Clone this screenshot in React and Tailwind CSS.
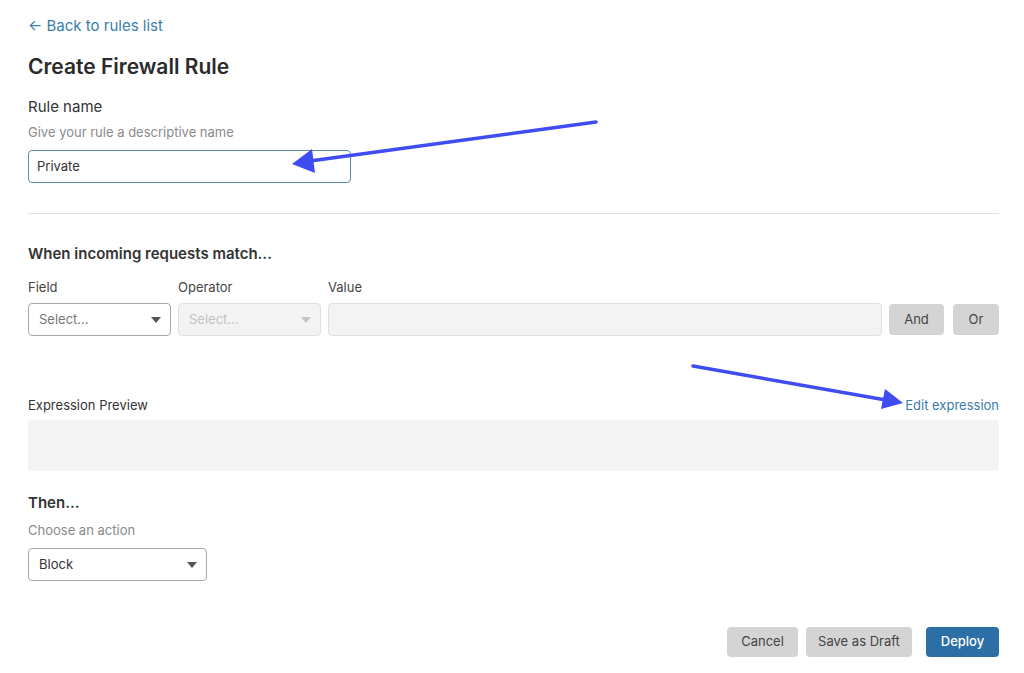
import React from "react";

const Caret = ({ color = "#555" }) => (
  <svg width="10" height="6" viewBox="0 0 10 6" className="shrink-0">
    <path d="M0 0 L10 0 L5 6 Z" fill={color} />
  </svg>
);

export default function App() {
  return (
    <div
      className="relative w-[1024px] h-[673px] overflow-hidden bg-white pl-[28px] pr-[25px] text-[#333]"
      style={{ fontFamily: "Inter, 'Noto Sans', 'Liberation Sans', sans-serif" }}
    >
      <div className="pt-[16px] flex flex-col">
        <a className="text-[15px] leading-[20px] text-[#3a7eab] w-fit">← Back to rules list</a>
        <h1 className="mt-[17px] text-[21px] leading-[28px] font-semibold text-[#2b2b2b]">Create Firewall Rule</h1>

        <div className="mt-[16px] text-[15px] leading-[20px] text-[#333]">Rule name</div>
        <div className="mt-[6px] text-[13px] leading-[18px] text-[#8a8a8a]">Give your rule a descriptive name</div>
        <div className="mt-[9px] w-[323px] h-[33px] rounded-[4px] border border-[#5b8db3] flex items-center px-[8px] text-[13px] text-[#333]">
          Private
        </div>

        <div className="mt-[30px] h-px bg-[#e2e2e2]" />

        <div className="mt-[30px] text-[15px] leading-[20px] font-semibold text-[#333]">When incoming requests match...</div>

        <div className="mt-[14px] flex items-end">
          <div className="flex flex-col w-[143px]">
            <span className="text-[13px] leading-[18px] text-[#444]">Field</span>
            <div className="mt-[7px] h-[33px] rounded-[4px] border border-[#a8a8a8] bg-white flex items-center justify-between pl-[10px] pr-[9px] text-[13px] text-[#777]">
              <span>Select...</span>
              <Caret />
            </div>
          </div>
          <div className="ml-[7px] flex flex-col w-[143px]">
            <span className="text-[13px] leading-[18px] text-[#444]">Operator</span>
            <div className="mt-[7px] h-[33px] rounded-[4px] border border-[#e0e0e0] bg-[#f3f3f3] flex items-center justify-between pl-[10px] pr-[9px] text-[13px] text-[#c2c2c2]">
              <span>Select...</span>
              <Caret color="#c4c4c4" />
            </div>
          </div>
          <div className="ml-[7px] flex flex-col flex-1">
            <span className="text-[13px] leading-[18px] text-[#444]">Value</span>
            <div className="mt-[7px] h-[33px] rounded-[4px] border border-[#e0e0e0] bg-[#f3f3f3]" />
          </div>
          <button className="ml-[7px] w-[55px] h-[31px] mb-px rounded-[4px] bg-[#d4d4d4] text-[13px] text-[#444]">And</button>
          <button className="ml-[9px] w-[46px] h-[31px] mb-px rounded-[4px] bg-[#d4d4d4] text-[13px] text-[#444]">Or</button>
        </div>

        <div className="mt-[60px] flex items-center justify-between text-[13px] leading-[18px]">
          <span className="text-[#333]">Expression Preview</span>
          <a className="text-[#3a7eab]">Edit expression</a>
        </div>
        <div className="mt-[6px] h-[51px] rounded-[4px] bg-[#f3f3f3]" />

        <div className="mt-[22px] text-[15px] leading-[20px] font-semibold text-[#333]">Then...</div>
        <div className="mt-[8px] text-[13px] leading-[18px] text-[#8a8a8a]">Choose an action</div>
        <div className="mt-[9px] w-[179px] h-[33px] rounded-[4px] border border-[#a8a8a8] flex items-center justify-between pl-[10px] pr-[9px] text-[13px] text-[#333]">
          <span>Block</span>
          <Caret />
        </div>

        <div className="mt-[46px] flex justify-end">
          <button className="w-[71px] h-[30px] rounded-[4px] bg-[#d4d4d4] text-[13px] text-[#444]">Cancel</button>
          <button className="ml-[8px] w-[106px] h-[30px] rounded-[4px] bg-[#d4d4d4] text-[13px] text-[#444]">Save as Draft</button>
          <button className="ml-[14px] w-[73px] h-[30px] rounded-[4px] bg-[#2c6ea6] text-[13px] font-medium text-white">Deploy</button>
        </div>
      </div>

      <svg className="absolute inset-0 pointer-events-none" width="1024" height="673" viewBox="0 0 1024 673">
        <line x1="596" y1="122" x2="310" y2="161" stroke="#3f4cf2" strokeWidth="3.5" strokeLinecap="round" />
        <polygon points="292,164 312,149 315,173" fill="#3f4cf2" />
        <line x1="693" y1="366" x2="886" y2="400" stroke="#3f4cf2" strokeWidth="3.5" strokeLinecap="round" />
        <polygon points="903,403 885,389 881,409" fill="#3f4cf2" />
      </svg>
    </div>
  );
}
